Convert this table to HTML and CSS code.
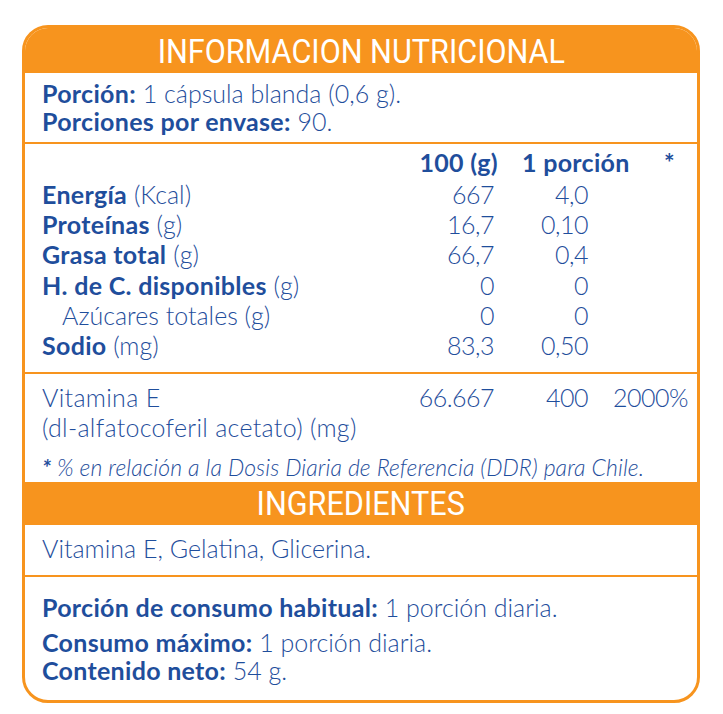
FILE: index.html
```html
<!DOCTYPE html>
<html lang="es">
<head>
<meta charset="utf-8">
<link rel="stylesheet" href="styles.css">
</head>
<body>
<div class="card">
  <div class="band band-top"><span class="band-text">INFORMACION NUTRICIONAL</span></div>
  <div class="serving">
    <div class="line"><b>Porción:</b> 1 cápsula blanda (0,6 g).</div>
    <div class="line"><b>Porciones por envase:</b> 90.</div>
  </div>
  <div class="table main">
    <div class="row head">
      <div></div>
      <div class="c1"><b>100 (g)</b></div>
      <div class="c2"><b>1 porción</b></div>
      <div class="c3"><b>*</b></div>
    </div>
    <div class="row"><div><b>Energía</b> (Kcal)</div><div class="num">667</div><div class="num">4,0</div><div></div></div>
    <div class="row"><div><b>Proteínas</b> (g)</div><div class="num">16,7</div><div class="num">0,10</div><div></div></div>
    <div class="row"><div><b>Grasa total</b> (g)</div><div class="num">66,7</div><div class="num">0,4</div><div></div></div>
    <div class="row"><div><b>H. de C. disponibles</b> (g)</div><div class="num">0</div><div class="num">0</div><div></div></div>
    <div class="row"><div class="indent">Azúcares totales (g)</div><div class="num">0</div><div class="num">0</div><div></div></div>
    <div class="row"><div><b>Sodio</b> (mg)</div><div class="num">83,3</div><div class="num">0,50</div><div></div></div>
  </div>
  <div class="table vit">
    <div class="row vrow"><div>Vitamina E</div><div class="num">66.667</div><div class="num">400</div><div class="num">2000%</div></div>
    <div class="row vrow"><div>(dl-alfatocoferil acetato) (mg)</div><div></div><div></div><div></div></div>
    <div class="note"><b>*</b> % en relación a la Dosis Diaria de Referencia (DDR) para Chile.</div>
  </div>
  <div class="band band-mid"><span class="band-text">INGREDIENTES</span></div>
  <div class="ingr">Vitamina E, Gelatina, Glicerina.</div>
  <div class="foot">
    <div class="line first"><b>Porción de consumo habitual:</b> 1 porción diaria.</div>
    <div class="line"><b>Consumo máximo:</b> 1 porción diaria.</div>
    <div class="line"><b>Contenido neto:</b> 54 g.</div>
  </div>
</div>
</body>
</html>
```

FILE: styles.css
```css
html, body {
  margin: 0;
  padding: 0;
  background: #ffffff;
}
body {
  font-family: Lato, "Open Sans", sans-serif;
  font-weight: 300;
  color: #1f4e9c;
  font-size: 25px;
}
b { font-weight: 700; letter-spacing: 0.3px; }
.card {
  box-sizing: border-box;
  margin: 25px 0 0 22px;
  width: 678px;
  height: 678px;
  border: 3px solid #f7941e;
  border-radius: 26px;
  overflow: hidden;
  display: flex;
  flex-direction: column;
}
.band {
  background: #f7941e;
  color: #ffffff;
  display: flex;
  justify-content: center;
  align-items: center;
  overflow: hidden;
}
.band-text {
  display: inline-block;
  font-family: Roboto, "Liberation Sans", sans-serif;
  font-weight: 400;
  font-size: 34px;
  line-height: 40px;
  transform: scaleX(0.9);
  white-space: nowrap;
}
.band-top { height: 44px; padding-top: 1px; }
.band-mid { height: 43px; margin-top: 2px; }
.serving {
  padding: 6px 0 7px 17px;
  border-bottom: 2px solid #f7941e;
}
.line { height: 28px; line-height: 28px; white-space: nowrap; }
.table {
  padding: 1px 9px 0 17px;
}
.row {
  display: grid;
  grid-template-columns: 1fr 100px 94px 100px;
  height: 30.2px;
  line-height: 30px;
  white-space: nowrap;
}
.head { height: 34px; line-height: 34px; }
.head .c1 { justify-self: end; margin-right: -4px; }
.head .c2 { justify-self: start; margin-left: 28px; }
.head .c3 { justify-self: end; margin-right: 13px; }
.num { text-align: right; letter-spacing: -0.5px; }
.indent { padding-left: 20px; }
.main { padding-bottom: 12px; }
.vit { border-top: 2px solid #f7941e; padding-top: 8px; }
.vrow { letter-spacing: 0.3px; }
.note {
  font-style: italic;
  font-size: 23px;
  margin-top: 11px;
  height: 26px;
  line-height: 26px;
  letter-spacing: 0.1px;
  white-space: nowrap;
}
.note b { letter-spacing: 0; }
.ingr {
  padding: 8px 0 0 17px;
  height: 52px;
  line-height: 30px;
  border-bottom: 2px solid #f7941e;
  box-sizing: border-box;
}
.foot {
  padding: 16px 0 0 17px;
}
.foot .first { margin-bottom: 7px; }
```
